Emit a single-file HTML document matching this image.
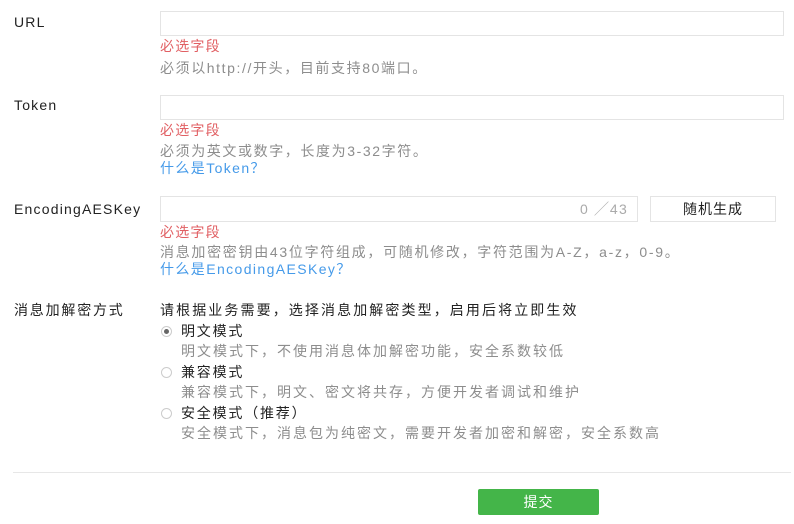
<!DOCTYPE html><html><head><meta charset="utf-8"><style>
body{margin:0;width:794px;height:524px;background:#fff;position:relative;overflow:hidden;font-family:"Liberation Sans","Noto Sans CJK SC",sans-serif;font-size:14px;letter-spacing:1.8px;color:#222}
.t{position:absolute;white-space:nowrap;line-height:16px}
.r{color:#e15f63}.g{color:#8d8d8d}.b{color:#459ae9}
.in{position:absolute;border:1px solid #e4e4e4;background:#fff;box-sizing:border-box}
.rad{position:absolute;width:11px;height:11px;border:1px solid #ccc;border-radius:50%;box-sizing:border-box;background:#fff}
</style></head><body>
<div class="t" style="left:14px;top:14px;letter-spacing:1.2px">URL</div>
<div class="in" style="left:160px;top:11px;width:624px;height:25px"></div>
<div class="t r" style="left:160px;top:38px;letter-spacing:1.2px">必选字段</div>
<div class="t g" style="left:160px;top:60px;letter-spacing:1.6px">必须以http://开头，目前支持80端口。</div>
<div class="t" style="left:14px;top:97px;letter-spacing:1.2px">Token</div>
<div class="in" style="left:160px;top:95px;width:624px;height:25px"></div>
<div class="t r" style="left:160px;top:122px;letter-spacing:1.2px">必选字段</div>
<div class="t g" style="left:160px;top:143px;letter-spacing:1.6px">必须为英文或数字，长度为3-32字符。</div>
<div class="t b" style="left:160px;top:160px;letter-spacing:1.4px">什么是Token？</div>
<div class="t" style="left:14px;top:201px;letter-spacing:1.2px">EncodingAESKey</div>
<div class="in" style="left:160px;top:196px;width:478px;height:26px"></div>
<div class="t g" style="left:580px;top:201px;color:#aaa;letter-spacing:1.4px">0 ╱43</div>
<div class="in" style="left:650px;top:196px;width:126px;height:26px;text-align:center;line-height:24px;letter-spacing:1px">随机生成</div>
<div class="t r" style="left:160px;top:224px;letter-spacing:1.2px">必选字段</div>
<div class="t g" style="left:160px;top:244px;letter-spacing:1.7px">消息加密密钥由43位字符组成，可随机修改，字符范围为A-Z，a-z，0-9。</div>
<div class="t b" style="left:160px;top:261px;letter-spacing:1.4px">什么是EncodingAESKey？</div>
<div class="t" style="left:14px;top:302px">消息加解密方式</div>
<div class="t" style="left:160px;top:302px;letter-spacing:2.1px">请根据业务需要，选择消息加解密类型，启用后将立即生效</div>
<div class="rad" style="left:161px;top:326px;background:#fff"><div style="width:5px;height:5px;border-radius:50%;background:#666;margin:2px"></div></div>
<div class="t" style="left:181px;top:323px">明文模式</div>
<div class="t g" style="left:181px;top:343px;letter-spacing:2px">明文模式下，不使用消息体加解密功能，安全系数较低</div>
<div class="rad" style="left:161px;top:367px"></div>
<div class="t" style="left:181px;top:364px">兼容模式</div>
<div class="t g" style="left:181px;top:384px;letter-spacing:2px">兼容模式下，明文、密文将共存，方便开发者调试和维护</div>
<div class="rad" style="left:161px;top:408px"></div>
<div class="t" style="left:181px;top:405px">安全模式（推荐）</div>
<div class="t g" style="left:181px;top:425px;letter-spacing:2px">安全模式下，消息包为纯密文，需要开发者加密和解密，安全系数高</div>
<div style="position:absolute;left:13px;top:472px;width:778px;height:1px;background:#e7e7e7"></div>
<div style="position:absolute;left:478px;top:489px;width:121px;height:26px;background:#44b549;border-radius:2px;color:#fff;text-align:center;line-height:26px;letter-spacing:1px">提交</div>
</body></html>
